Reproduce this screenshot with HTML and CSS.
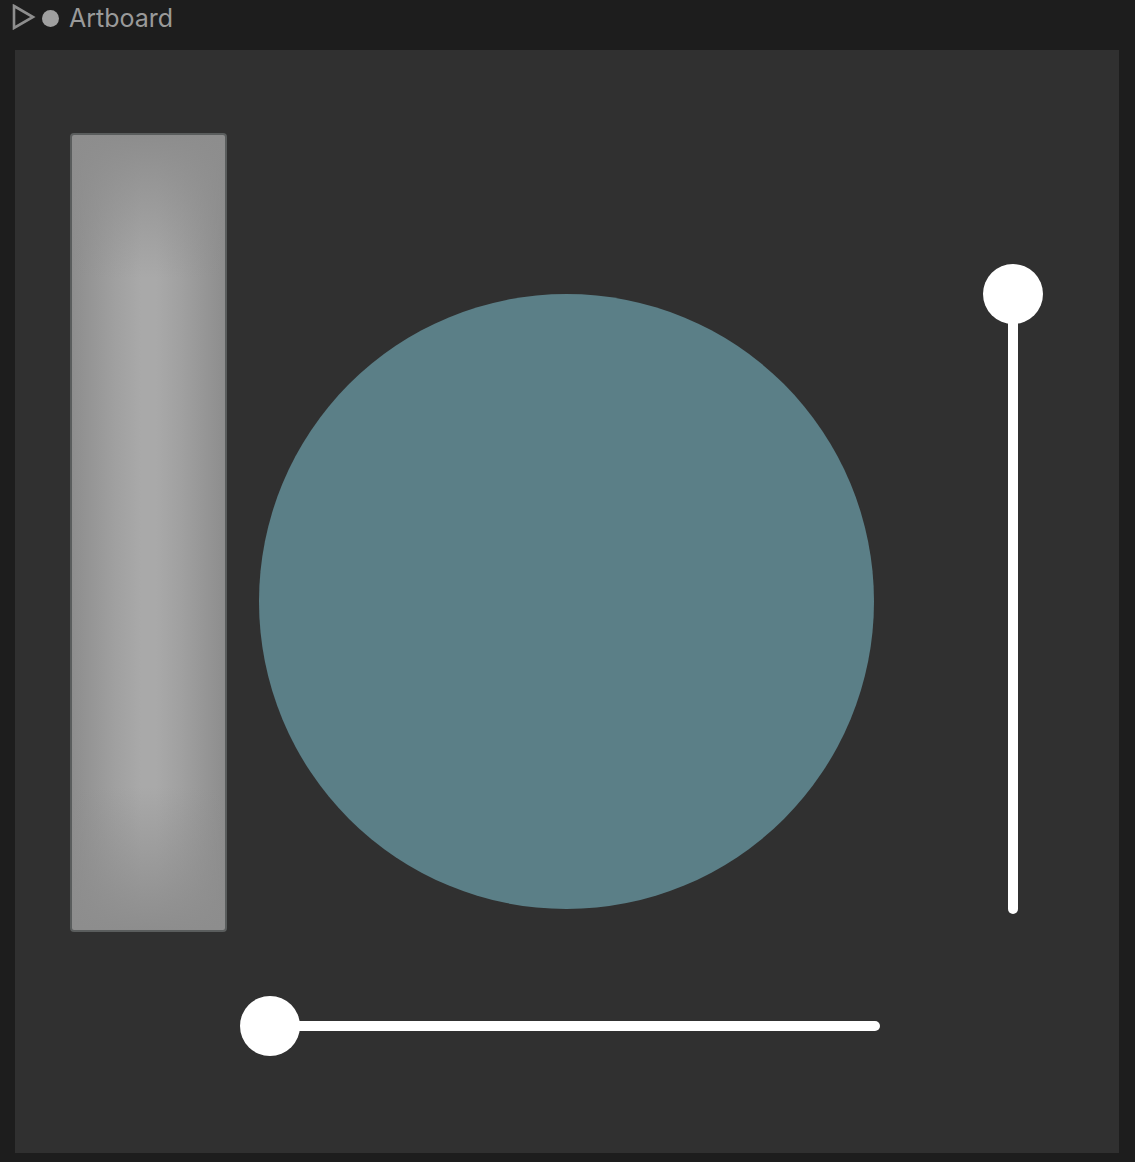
FILE: index.html
```html
<!DOCTYPE html>
<html lang="en">
<head>
    <meta charset="UTF-8">
    <meta name="viewport" content="width=device-width, initial-scale=1.0">
    <title>Artboard</title>
    <link rel="stylesheet" href="styles.css">
</head>
<body>
    <div class="header">
        <svg class="play" width="24" height="26" viewBox="0 0 24 26">
            <path d="M2 2 L21 13 L2 24 Z" fill="none" stroke="#8e8e8e" stroke-width="2.6" stroke-linejoin="miter"/>
        </svg>
        <span class="dot"></span>
        <span class="title">Artboard</span>
    </div>

    <div class="artboard">
        <div class="bar"></div>
        <div class="circle"></div>

        <div class="slider vertical">
            <div class="track"></div>
            <div class="knob"></div>
        </div>

        <div class="slider horizontal">
            <div class="track"></div>
            <div class="knob"></div>
        </div>
    </div>
</body>
</html>
```

FILE: styles.css
```css
html, body { margin: 0; padding: 0; }
body { background: #1d1d1d; width: 1135px; height: 1162px; overflow: hidden; font-family: Inter, "Noto Sans", sans-serif; }

.header { height: 50px; display: flex; align-items: flex-start; padding: 0 0 0 12px; box-sizing: border-box; }
.play { margin-top: 4px; }
.dot { width: 17px; height: 17px; border-radius: 50%; background: #a0a0a0; margin: 10px 0 0 6px; }
.title { color: #9a9a9a; font-size: 25px; line-height: 36px; margin-left: 10px; }

.artboard { position: relative; margin-left: 15px; width: 1104px; height: 1103px; background: #303030; }

.bar {
    position: absolute; left: 55px; top: 83px; width: 153px; height: 795px;
    border: 2px solid #5a5d5d; border-radius: 4px;
    background:
        linear-gradient(to bottom, #8d8d8d 0%, rgba(141, 141, 141, 0) 18%, rgba(141, 141, 141, 0) 82%, #8d8d8d 100%),
        linear-gradient(to right, #8d8d8d 0%, #a0a0a0 28%, #a9a9a9 45%, #a9a9a9 55%, #a0a0a0 72%, #8d8d8d 100%);
}

.circle {
    position: absolute; left: 244px; top: 244px; width: 615px; height: 615px;
    border-radius: 50%; background: #5b7f87;
}

.slider { position: absolute; }
.knob { position: absolute; width: 60px; height: 60px; border-radius: 50%; background: #fff; }
.track { position: absolute; background: #fff; border-radius: 5px; }

.vertical { left: 968px; top: 214px; width: 60px; height: 650px; }
.vertical .knob { left: 0; top: 0; }
.vertical .track { left: 25px; top: 30px; width: 10px; height: 620px; }

.horizontal { left: 225px; top: 946px; width: 642px; height: 60px; }
.horizontal .knob { left: 0; top: 0; }
.horizontal .track { left: 30px; top: 25px; width: 610px; height: 10px; }
```
